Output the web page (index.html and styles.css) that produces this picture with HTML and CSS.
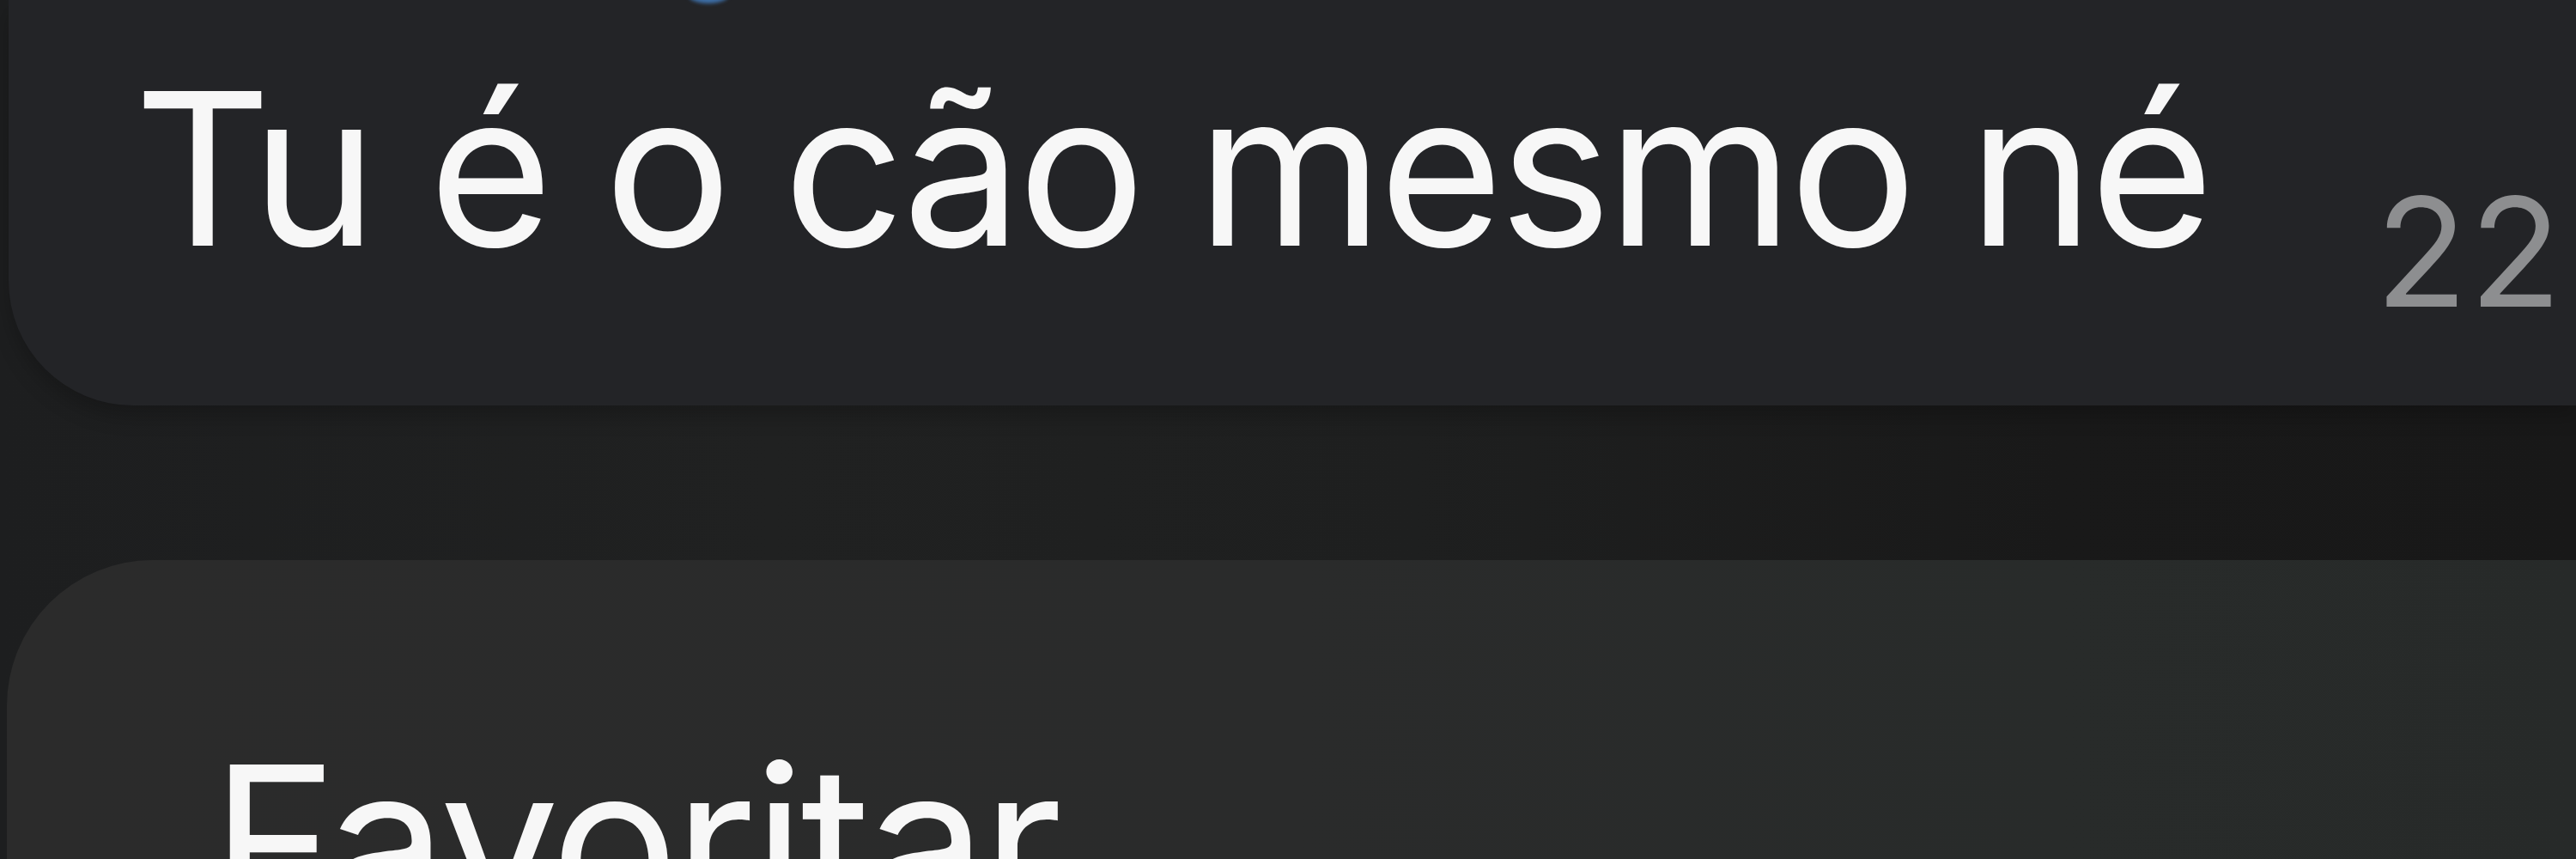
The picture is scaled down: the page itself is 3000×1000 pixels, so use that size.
FILE: index.html
```html
<!DOCTYPE html>
<html lang="pt">
<head>
<meta charset="utf-8">
<title>Mensagem</title>
<link rel="stylesheet" href="styles.css">
</head>
<body>
<div class="screen">
  <div class="bubble">
    <span class="link-mark"></span>
    <p class="msg">Tu é o cão mesmo né</p>
    <span class="time">22</span>
  </div>
  <div class="menu">
    <div class="menu-item">Favoritar</div>
  </div>
</div>
</body>
</html>
```

FILE: styles.css
```css
html, body {
  margin: 0;
  padding: 0;
}
body {
  width: 3000px;
  height: 1000px;
  overflow: hidden;
  background: linear-gradient(to right, #1d1e1f 0%, #202121 30%, #1e1f1f 55%, #191919 80%, #181818 100%);
  font-family: "Inter", "Roboto", "Liberation Sans", sans-serif;
}
.screen {
  display: flex;
  flex-direction: column;
  height: 1000px;
}
.bubble {
  position: relative;
  flex-shrink: 0;
  box-sizing: border-box;
  height: 472px;
  margin-left: 10px;
  padding: 46px 0 0 146px;
  background: #232427;
  border-bottom-left-radius: 145px;
  display: flex;
  align-items: flex-start;
  box-shadow: 0 12px 24px rgba(0, 0, 0, 0.22);
}
.link-mark {
  position: absolute;
  left: 792px;
  top: -14px;
  width: 46px;
  height: 18px;
  border-radius: 50%;
  background: #3d6fa8;
  filter: blur(2px);
}
.msg {
  margin: 0;
  font-size: 248px;
  line-height: 300px;
  letter-spacing: -5px;
  color: #f7f7f7;
  font-weight: 400;
  white-space: nowrap;
}
.time {
  margin-left: 193px;
  margin-top: 138px;
  font-size: 176px;
  line-height: 218px;
  color: #8d8e90;
  letter-spacing: 2px;
  white-space: nowrap;
}
.menu {
  flex-shrink: 0;
  height: 600px;
  margin-top: 180px;
  margin-left: 8px;
  background: linear-gradient(to right, #2b2b2b 0%, #2a2b2b 50%, #282b2a 80%, #272a29 100%);
  border-top-left-radius: 170px;
  box-sizing: border-box;
  padding: 178px 0 0 238px;
}
.menu-item {
  font-size: 248px;
  line-height: 300px;
  letter-spacing: -5px;
  color: #f7f7f7;
  white-space: nowrap;
}
```
